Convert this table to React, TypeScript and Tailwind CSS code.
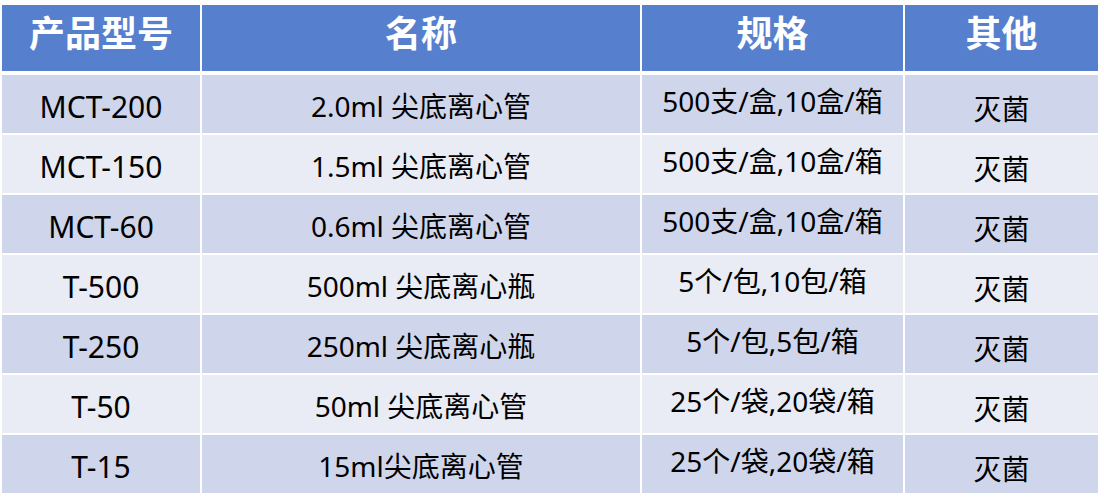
import React from "react";

const rows = [
  ["MCT-200", "2.0ml 尖底离心管", "500支/盒,10盒/箱", "灭菌"],
  ["MCT-150", "1.5ml 尖底离心管", "500支/盒,10盒/箱", "灭菌"],
  ["MCT-60", "0.6ml 尖底离心管", "500支/盒,10盒/箱", "灭菌"],
  ["T-500", "500ml 尖底离心瓶", "5个/包,10包/箱", "灭菌"],
  ["T-250", "250ml 尖底离心瓶", "5个/包,5包/箱", "灭菌"],
  ["T-50", "50ml 尖底离心管", "25个/袋,20袋/箱", "灭菌"],
  ["T-15", "15ml尖底离心管", "25个/袋,20袋/箱", "灭菌"],
];

const headers = ["产品型号", "名称", "规格", "其他"];

export default function App() {
  return (
    <div
      className="w-[1104px] h-[502px] bg-white pt-[5px] pl-[2px]"
      style={{ fontFamily: '"Noto Sans", "Noto Sans CJK SC", sans-serif' }}
    >
      <div className="grid grid-cols-[198px_438px_261px_193px] gap-x-[2px] w-[1096px]">
        {headers.map((h) => (
          <div
            key={h}
            className="h-[66px] bg-[#5680ce] text-white font-bold text-[36px] flex items-center justify-center pb-[8px] leading-none"
          >
            {h}
          </div>
        ))}
      </div>
      <div className="grid grid-cols-[198px_438px_261px_193px] gap-x-[2px] gap-y-[2px] w-[1096px] mt-[4px]">
        {rows.map((r, i) => {
          const bg = i % 2 === 0 ? "bg-[#cfd5ea]" : "bg-[#e9ebf5]";
          return (
            <React.Fragment key={i}>
              <div className={`${bg} h-[58px] flex items-center justify-center text-[30px] text-black pt-[4px]`}>{r[0]}</div>
              <div className={`${bg} h-[58px] flex items-center justify-center text-[28px] text-black pt-[4px]`}>{r[1]}</div>
              <div className={`${bg} h-[58px] flex items-center justify-center text-[28px] text-black pb-[7px]`}>{r[2]}</div>
              <div className={`${bg} h-[58px] flex items-center justify-center text-[28px] text-black pt-[9px]`}>{r[3]}</div>
            </React.Fragment>
          );
        })}
      </div>
    </div>
  );
}
